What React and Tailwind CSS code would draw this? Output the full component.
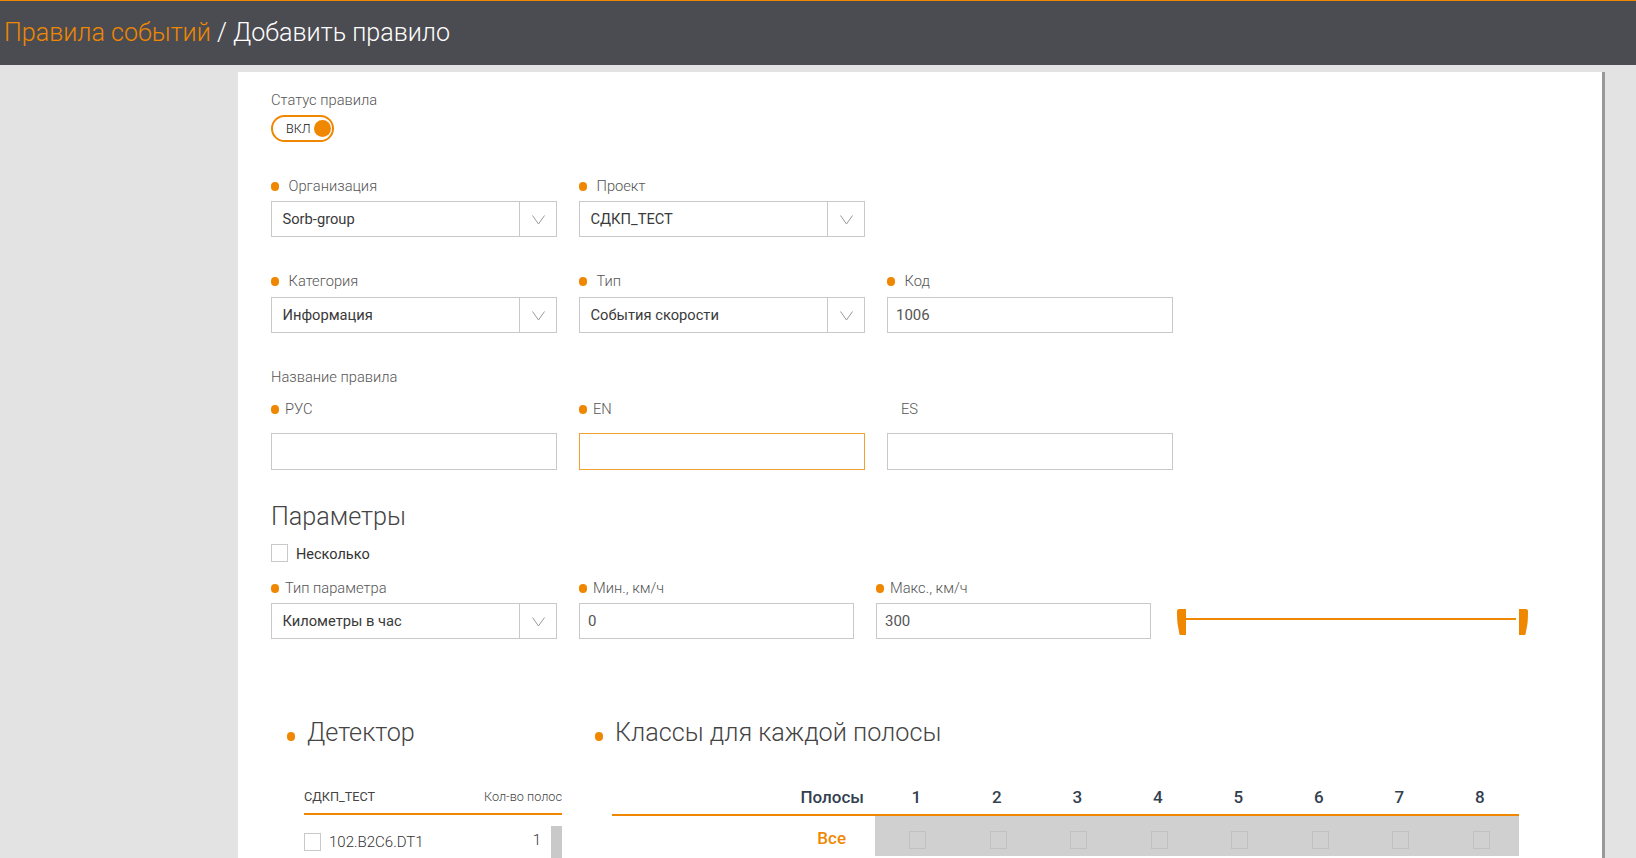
import React from 'react';

const Dot = ({ className = '' }) => (
  <span className={`inline-block h-[9px] w-2 shrink-0 rounded-full bg-[#ef8700] ${className}`}></span>
);

const Label = ({ children, gap = 'mr-[9.5px]', required = true }) => (
  <div className="flex h-5 items-center text-[14.7px] font-light leading-5 text-[#555]">
    {required && <Dot className={gap} />}
    <span>{children}</span>
  </div>
);

const Chevron = () => (
  <svg width="13" height="10" viewBox="0 0 13 10" fill="none" stroke="#999" strokeWidth="1" className="mt-[1px]">
    <path d="M0.5 0.5 L6.5 9 L12.5 0.5" />
  </svg>
);

const Select = ({ value }) => (
  <div className="flex h-9 w-[286px] items-stretch border border-[#c9c9c9] bg-white">
    <div className="flex flex-1 items-center pl-[10.5px] text-[14.7px] text-[#3a3a3a]">{value}</div>
    <div className="flex w-[37px] items-center justify-center border-l border-[#c9c9c9]">
      <Chevron />
    </div>
  </div>
);

const Input = ({ value = '', className = 'h-[37px] w-[286px]', focused = false }) => (
  <div
    className={`flex items-center border pl-[8px] text-[15px] text-[#555] ${className} ${
      focused ? 'border-[#efa22f]' : 'border-[#c9c9c9]'
    }`}
  >
    {value}
  </div>
);

const Checkbox = ({ className = 'border-[#c9c9c9]' }) => (
  <span className={`block h-[18px] w-[17px] shrink-0 border ${className}`}></span>
);

const Handle = ({ flip = false }) => (
  <svg width="9" height="26" viewBox="0 0 9 26" className={flip ? '-scale-x-100' : ''}>
    <path d="M2 0 H9 V26 H3.5 C3 26 2.6 25.6 2.4 25 L0.6 15 C0.2 12 0 8 0 2 C0 1 1 0 2 0 Z" fill="#ef8700" />
  </svg>
);

const lanes = [1, 2, 3, 4, 5, 6, 7, 8];

const App = () => {
  return (
    <div className="h-[858px] overflow-hidden bg-[#e3e3e3] font-['Roboto',sans-serif]">
      {/* Header */}
      <header className="flex h-[65px] items-center border-t border-[#ef8700] bg-[#4b4c52] pl-[4px] text-[25.1px] font-light text-white">
        <span className="text-[#ef8700]">Правила событий</span>
        <span className="whitespace-pre"> / Добавить правило</span>
      </header>

      <main className="mt-[7px] ml-[238px] h-[800px] w-[1367px] border-r-[3px] border-[#999] bg-white pt-[18px] pl-[33px]">
        <div className="flex h-5 items-center text-[14.7px] font-light text-[#555]">Статус правила</div>
        <div className="relative mt-[5px] flex h-[27px] w-[63px] items-center rounded-full border-2 border-[#ef8700] pt-[1px] pl-[13px] text-[12.5px] font-light text-[#111]">
          ВКЛ
          <span className="absolute top-[3px] right-[1px] h-[17px] w-[17px] rounded-full bg-[#ef8700]"></span>
        </div>

        <div className="mt-[34px] flex gap-[22px]">
          <div>
            <Label>Организация</Label>
            <div className="mt-[5px]"><Select value="Sorb-group" /></div>
          </div>
          <div>
            <Label>Проект</Label>
            <div className="mt-[5px]"><Select value="СДКП_ТЕСТ" /></div>
          </div>
        </div>

        <div className="mt-[34px] flex gap-[22px]">
          <div>
            <Label>Категория</Label>
            <div className="mt-[6px]"><Select value="Информация" /></div>
          </div>
          <div>
            <Label>Тип</Label>
            <div className="mt-[6px]"><Select value="События скорости" /></div>
          </div>
          <div>
            <Label>Код</Label>
            <div className="mt-[6px]"><Input value="1006" className="h-9 w-[286px]" /></div>
          </div>
        </div>

        <div className="mt-[34px] flex h-5 items-center text-[14.7px] font-light text-[#555]">Название правила</div>
        <div className="mt-[12px] flex gap-[22px]">
          <div>
            <Label gap="mr-[6px]">РУС</Label>
            <div className="mt-[14px]"><Input /></div>
          </div>
          <div>
            <Label gap="mr-[6px]">EN</Label>
            <div className="mt-[14px]"><Input focused /></div>
          </div>
          <div>
            <div className="pl-[14px]"><Label required={false}>ES</Label></div>
            <div className="mt-[14px]"><Input /></div>
          </div>
        </div>

        <h2 className="mt-[30px] h-[33px] text-[25.2px] leading-[33px] font-light text-[#444]">Параметры</h2>
        <div className="mt-[11px] flex h-[18px] items-center text-[14.5px] text-[#333]">
          <Checkbox />
          <span className="mt-[3px] ml-2">Несколько</span>
        </div>

        <div className="mt-[16px] flex items-start">
          <div>
            <Label gap="mr-[6px]">Тип параметра</Label>
            <div className="mt-[5px]"><Select value="Километры в час" /></div>
          </div>
          <div className="ml-[22px]">
            <Label gap="mr-[6px]">Мин., км/ч</Label>
            <div className="mt-[5px]"><Input value="0" className="h-9 w-[275px]" /></div>
          </div>
          <div className="ml-[22px]">
            <Label gap="mr-[6px]">Макс., км/ч</Label>
            <div className="mt-[5px]"><Input value="300" className="h-9 w-[275px]" /></div>
          </div>
          {/* Range slider */}
          <div className="mt-[31px] ml-[26px] flex w-[351px] items-start">
            <Handle />
            <div className="mt-[9px] h-0.5 flex-1 bg-[#ef8700]"></div>
            <div className="ml-[3px]"><Handle flip /></div>
          </div>
        </div>

        <div className="mt-[78px] ml-[16px] flex">
          {/* Detector */}
          <section className="w-[275px]">
            <div className="flex h-8 items-center text-[25.2px] font-light text-[#444]">
              <Dot className="mt-[6px] mr-3" />
              <span>Детектор</span>
            </div>
            <div className="mt-[38px] ml-[17px]">
              <div className="flex h-[28px] items-start justify-between border-b-2 border-[#ef8700] pb-1 text-[12.7px] leading-5 text-[#444]">
                <span>СДКП_ТЕСТ</span>
                <span className="font-light">Кол-во полос</span>
              </div>
              <div className="mt-[11px] flex items-stretch">
                <div className="flex flex-1 items-start pt-[7px]">
                  <Checkbox />
                  <span className="ml-2 text-[15px] leading-[18px] font-light text-[#333]">102.B2C6.DT1</span>
                  <span className="mr-[10px] ml-auto text-[15px] leading-[14px] font-light text-[#333]">1</span>
                </div>
                <div className="h-10 w-[11px] bg-[#c9c9c9]"></div>
              </div>
            </div>
          </section>

          {/* Classes per lane */}
          <section className="ml-[33px]">
            <div className="flex h-8 items-center text-[25.2px] font-light text-[#444]">
              <Dot className="mt-[6px] mr-3" />
              <span>Классы для каждой полосы</span>
            </div>
            <div className="mt-[38px] ml-[17px] w-[907px]">
              <div className="flex h-[29px] items-start border-b-2 border-[#ef8700] text-[17px] leading-5 font-medium text-[#333f4f]">
                <div className="w-[263px] pr-[11px] text-right">Полосы</div>
                {lanes.map((n) => (
                  <div key={n} className="w-[80.5px] pl-[2px] text-center">{n}</div>
                ))}
              </div>
              <div className="flex h-10">
                <div className="w-[263px] pt-[12px] pr-[29px] text-right text-[17px] leading-5 font-medium text-[#ef8700]">Все</div>
                <div className="flex flex-1 bg-[#d1d0d1] pt-[15px]">
                  {lanes.map((n) => (
                    <div key={n} className="w-[80.5px] pl-[34px]">
                      <Checkbox className="border-[#c2c1c2]" />
                    </div>
                  ))}
                </div>
              </div>
            </div>
          </section>
        </div>
      </main>
    </div>
  );
};

export default App;
